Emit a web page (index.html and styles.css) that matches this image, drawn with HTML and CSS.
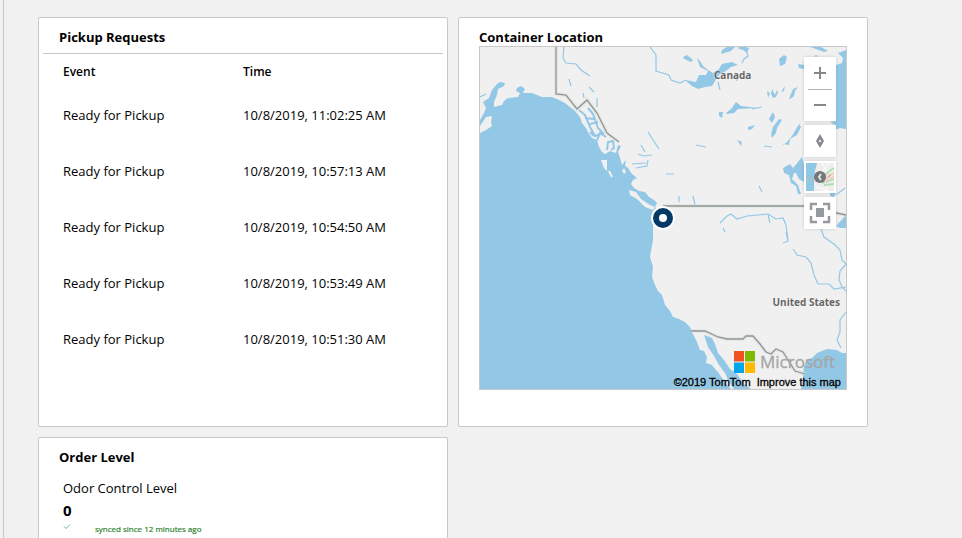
FILE: index.html
```html
<!DOCTYPE html>
<html lang="en">
<head>
<meta charset="utf-8">
<title>Container dashboard</title>
<link rel="stylesheet" href="styles.css">
</head>
<body>
<main class="board">
  <section class="card">
    <h2 class="card-title ruled">Pickup Requests</h2>
    <table class="events">
      <thead><tr><th>Event</th><th>Time</th></tr></thead>
      <tbody>
        <tr><td>Ready for Pickup</td><td>10/8/2019, 11:02:25 AM</td></tr>
        <tr><td>Ready for Pickup</td><td>10/8/2019, 10:57:13 AM</td></tr>
        <tr><td>Ready for Pickup</td><td>10/8/2019, 10:54:50 AM</td></tr>
        <tr><td>Ready for Pickup</td><td>10/8/2019, 10:53:49 AM</td></tr>
        <tr><td>Ready for Pickup</td><td>10/8/2019, 10:51:30 AM</td></tr>
      </tbody>
    </table>
  </section>

  <section class="card">
    <h2 class="card-title">Container Location</h2>
    <div class="map">
      <svg class="map-canvas" viewBox="480 47 366 342" preserveAspectRatio="xMidYMid slice" aria-hidden="true">
        <!-- Pacific -->
        <path class="water" d="M480 120L484 113 486 108 483 102 489 98 492 90 497 84 500 82 505 83 504 86 498 89 497 95 494 102 494 107 502 105 504 101 508 98 518 97 520 93 516 91 517 88 521 86 525 89 523 93 532 93 537 95 542 97 552 97 559 100 565 103 570 107 575 111 580 117 582 123 586 128 588 132 592 138 597 140 599 147 602 152 605 154 610 151 616 153 618 145 621 146 618 152 620 158 622 165 626 160 625 166 628 168 632 174 637 178 633 180 631 184 634 188 639 191 645 192 649 197 654 200 657 203 655 207 659 210 659 214 654 214 653 222 653 240 650 257 653 267 652 277 655 285 658 291 662 295 665 305 670 311 673 317 679 319 685 322 690 327 692 332 697 342 700 350 704 351 707 357 706 363 712 365 715 369 718 372 722 378 727 384 731 389H480Z"/>
        <!-- Gulf of California, Gulf of Mexico, Hudson Bay -->
        <path class="water" d="M704 335L712 338 715 344 718 353 724 360 730 369 737 374 744 384 751 389H734L729 382 725 373 719 365 714 356 708 347Z"/>
        <path class="water" d="M846 353L842 353 837 350 827 349 817 353 812 358 807 360 804 366 803 373 803 382 801 389H846Z"/>
        <path class="water" d="M846 50L838 53 843 58 842 63 836 65V121L830 122 835 125V129H846V50Z"/>
        <!-- coastal islands -->
        <path class="land" d="M480 126L486 117 492 116 491 122 492 126 486 130 480 133ZM598 138L604 139 607 148 606 154 602 151 599 145ZM601 160L607 160 607 171 604 168ZM629 190L636 192 641 199 650 205 655 207 653 210 645 207 637 199 630 195ZM836 130L840 128 845 129V131H838ZM624 168L626 172 624 174 622 171Z"/>
        <path class="island" d="M609 171L612 177M721 374L728 385"/>
        <!-- channels of the Alexander archipelago -->
        <path class="inlet" d="M579 110L585 115 590 127 595 136 603 133 598 128 593 114 588 108M585 118L594 119M590 124L598 122M597 140L600 133 606 137M607 150L608 142 613 141 614 148 611 150M594 136L590 132"/>
        <!-- lakes -->
        <path class="water" d="M683 57L687 55 693 60 691 62 684 59ZM697 58L700 61 703 66 708 70 713 73 719 69 722 64 732 62 738 65 731 67 726 71 719 75 715 81 712 86 705 87 698 89 692 86 685 80 696 82 699 75 706 75 708 71 700 67ZM722 50L727 47H735L731 51 721 54ZM737 48L743 46 749 48 747 53 743 50ZM779 59L784 55 787 57 785 64 780 66ZM810 47H821L828 51 824 52 816 49ZM798 64L804 65 804 69 799 68ZM726 113L732 108 736 102 741 106 750 107 757 108 738 109 734 113 727 114ZM719 112L723 112 722 118 719 116ZM769 119L773 112 775 117 772 123ZM773 127L779 119 782 120 777 128 776 133 772 138 771 134ZM748 127L755 125 752 129 748 130ZM767 91L770 93 768 98ZM772 89L775 95 777 90 778 92 776 97 773 98 771 94ZM785 86L784 91 781 92ZM789 99L793 89 798 87 795 91 794 96 790 99ZM783 145L787 142 792 136 799 124 801 127 797 135 790 139 789 145 783 144ZM737 140L742 142 741 146ZM783 168L790 164 793 168 798 162 802 157 804 164V182L799 179 796 173 794 173 792 179 798 185 801 194 798 194 796 186 791 183 789 175 784 173ZM846 215L836 226 840 228H846ZM830 193H836L834 197 830 196Z"/>
        <!-- rivers -->
        <path class="river" d="M564 47L563 58 566 63 576 64 581 70 590 76M569 79L571 86M584 98L583 93M589 87L594 92M597 98L597 107M650 47L656 55 656 71 669 75 671 80 680 83 686 80M742 63L744 59 748 56 746 50M718 82L720 90M736 77L737 81M696 145L706 147M666 174L674 174M752 109L762 107M764 146L772 147M679 196V202M693 196L695 205M759 186L762 192M648 132L655 143 659 149M641 145L645 152M638 154L644 156 652 155M632 164L646 163M636 168L647 166 648 160M720 223L727 216 731 214 737 219 747 216 758 215 768 214 776 219 783 218 786 225M723 228L725 232M786 225L788 240M768 215L770 223M821 229L824 237 834 244 840 250 842 260 846 264 840 271 839 280 842 287 846 291M786 232L788 241 783 243M793 249L797 255 806 257 811 263 814 275 818 284 829 284 834 289 846 287M836 195L845 188M846 312L840 320 840 332 837 340 841 348M480 97L486 94M816 55V58"/>
        <!-- borders -->
        <path class="border-halo" d="M556 47V94L566 95 577 109 587 100 597 113 607 133 619 142M663 206H804L846 215M691 331H705L718 337 727 339H743L746 336H753L760 344 766 352 771 354 776 349 783 352 795 371 805 374"/>
        <path class="border" d="M556 47V94L566 95 577 109 587 100 597 113 607 133 619 142M663 206H804L846 215M691 331H705L718 337 727 339H743L746 336H753L760 344 766 352 771 354 776 349 783 352 795 371 805 374"/>
        <circle cx="663" cy="218" r="12" fill="#fff"/>
        <circle cx="663" cy="218" r="7" fill="#fff" stroke="#063a66" stroke-width="6"/>
      </svg>
      <span class="place canada">Canada</span>
      <span class="place states">United States</span>
      <div class="controls">
        <div class="zoom">
          <button type="button" aria-label="Zoom in"><svg width="32" height="32" viewBox="0 0 32 32"><path d="M10 16H22M16 10V22" stroke="#85888d" stroke-width="2"/></svg></button>
          <button type="button" aria-label="Zoom out"><svg width="32" height="32" viewBox="0 0 32 32"><path d="M4 .5H28" stroke="#b2b2b2"/><path d="M10 16H22" stroke="#85888d" stroke-width="2"/></svg></button>
        </div>
        <button type="button" aria-label="Reset bearing"><svg width="32" height="32" viewBox="0 0 32 32"><path d="M16 9L20 16 16 23 12 16Z" fill="#85888d"/><circle cx="16" cy="16" r="1.3" fill="#e4e4e6"/></svg></button>
        <button type="button" aria-label="Map style"><svg width="32" height="32" viewBox="0 0 32 32"><path fill="#eeeeec" d="M2 2H30V30H2Z"/><path fill="#8fc7e6" d="M2 2H13L11 10 10 20V30H2Z"/><path d="M2 17H20M2 20H11" stroke="#b7bcc0"/><path d="M18 2L23 12M25 2L18 11M12 26L25 30M21 21L23 30" stroke="#fff" fill="none"/><path d="M18 17L23 12 30 7M18 22L30 18M20 24L30 23" stroke="#ade0b6" stroke-width="2" fill="none"/><path d="M19 20L25 14 30 12M20 21L30 15" stroke="#f4cfc3" stroke-width="2"/><circle cx="16" cy="16" r="6" fill="#747679"/><path d="M17 13L15 16 17 19" stroke="#e4e4e6" stroke-width="2" fill="none"/></svg></button>
        <button type="button" aria-label="Fit to view"><svg width="32" height="32" viewBox="0 0 32 32"><path d="M12 11H20V20H12Z" fill="#96999e"/><path d="M7 13V7H13M19 7H25V13M25 19V25H19M13 25H7V19" fill="none" stroke="#96999e" stroke-width="2.5"/></svg></button>
      </div>
      <div class="brand">
        <svg width="21" height="22" viewBox="0 0 21 22" aria-hidden="true"><path fill="#f25022" d="M0 0H10V10.500H0Z"/><path fill="#7fba00" d="M11 0H21V10.500H11Z"/><path fill="#00a4ef" d="M0 11.500H10V22H0Z"/><path fill="#ffb900" d="M11 11.500H21V22H11Z"/></svg>
        <span>Microsoft</span>
      </div>
      <div class="credits"><span>©2019 TomTom</span><a href="#">Improve this map</a></div>
    </div>
  </section>

  <section class="card">
    <h2 class="card-title">Order Level</h2>
    <div class="level">
      <div class="level-name">Odor Control Level</div>
      <div class="level-value">0</div>
      <div class="sync">
        <svg width="8" height="8" viewBox="0 0 8 8" aria-hidden="true"><path d="M1 3.500L3 5.500 7 1.500" fill="none" stroke="#459e88" stroke-width=".8"/></svg>
        <span>synced since 12 minutes ago</span>
      </div>
    </div>
  </section>
</main>
</body>
</html>
```
FILE: styles.css
```css
* { box-sizing: border-box; }

body {
  margin: 0;
  background: #f1f1f1;
  color: #000;
  font: 13px/20px "Open Sans", "Noto Sans", sans-serif;
}

.board {
  display: grid;
  grid-template-columns: repeat(auto-fill, 410px);
  grid-auto-rows: minmax(410px, auto);
  align-content: start;
  gap: 10px;
  height: 100vh;
  margin-left: 3px;
  padding: 17px 34px 0;
  border-left: 1px solid #c8c8c8;
  overflow: hidden;
}

.card {
  padding: 8px 4px 4px;
  background: #fff;
  border: 1px solid #c8c8c8;
  border-radius: 2px;
}

.card-title {
  margin: 0;
  padding: 2px 16px 0;
  font-size: 13px;
  line-height: 18px;
  font-weight: 700;
}

.ruled {
  padding-bottom: 7px;
  border-bottom: 1px solid #c8c8c8;
}

.events {
  width: 100%;
  border-collapse: collapse;
  table-layout: fixed;
}

.events th,
.events td {
  height: 56px;
  padding: 0 20px;
  text-align: left;
  font-weight: 400;
}

.events th {
  height: 33px;
  padding-top: 2px;
  font-size: 12px;
  font-weight: 600;
}

.events th:first-child { width: 45%; }

.map {
  position: relative;
  height: 344px;
  margin: 0 16px;
  border: 1px solid #c8c8c8;
  background: #f0f0f0;
  overflow: hidden;
}

.map-canvas {
  display: block;
  width: 100%;
  height: 100%;
}

.water { fill: #93c7e6; }
.land { fill: #f0f0f0; }
.island { fill: none; stroke: #f0f0f0; stroke-width: 2; }
.river { fill: none; stroke: #93c7e6; stroke-width: 1.2; }
.inlet { fill: none; stroke: #93c7e6; stroke-width: 2; }
.border { fill: none; stroke: #919591; stroke-width: 1.3; }
.border-halo { fill: none; stroke: #dce3df; stroke-opacity: .6; stroke-width: 4; }

.place {
  position: absolute;
  color: #666;
  font-size: 10px;
  line-height: 12px;
  font-weight: 700;
  text-shadow: 0 0 2px #fff;
  white-space: nowrap;
}

.canada { top: 22px; left: 234px; }
.states { top: 249px; right: 6px; }

.controls {
  position: absolute;
  top: 10px;
  right: 10px;
  display: grid;
  gap: 4px;
}

.controls button {
  display: block;
  width: 32px;
  height: 32px;
  padding: 0;
  border: 0;
  background: #fff;
  box-shadow: 0 0 3px rgba(0, 0, 0, .16);
}

.controls .zoom {
  box-shadow: 0 0 3px rgba(0, 0, 0, .16);
}

.controls .zoom button { box-shadow: none; }
.controls svg { display: block; }

.brand {
  position: absolute;
  right: 11px;
  bottom: 16px;
  display: flex;
  align-items: center;
  gap: 5px;
  color: #a5a5a5;
  font-size: 17px;
  line-height: 22px;
  font-weight: 400;
  -webkit-text-stroke: .3px #a5a5a5;
}

.credits {
  position: absolute;
  right: 5px;
  bottom: 0;
  display: flex;
  gap: 6px;
  font: 11px/14px "Liberation Sans", Arial, sans-serif;
  -webkit-text-stroke: .3px #000;
  white-space: nowrap;
}

.credits a {
  color: inherit;
  text-decoration: none;
}

.level { padding: 12px 20px 0; }

.level-value {
  font-size: 15px;
  line-height: 24px;
  font-weight: 700;
}

.sync {
  display: flex;
  gap: 24px;
  padding-top: 1px;
  color: #2f832f;
  font-size: 8px;
  line-height: 12px;
  font-weight: 400;
  -webkit-text-stroke: .2px #2f832f;
}
```
